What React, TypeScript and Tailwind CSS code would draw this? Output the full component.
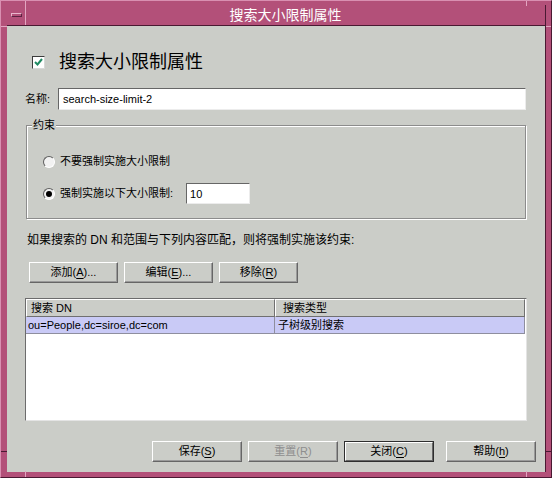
import type { ReactNode } from 'react'

const GREY = 'bg-[#cbcdc8]'

function Btn({ children, className = '', disabled = false }: { children: ReactNode; className?: string; disabled?: boolean }) {
  return (
    <button
      className={`h-[21px] flex items-center justify-center text-[11px] leading-none bg-[#cbcdc8] border border-t-white border-l-white border-r-[#666] border-b-[#666] shadow-[inset_-1px_-1px_0_#9a9a9a] ${disabled ? 'text-[#8e8e8e]' : 'text-black'} ${className}`}
    >
      {children}
    </button>
  )
}

function Mn({ children }: { children: ReactNode }) {
  return <span className="underline underline-offset-2">{children}</span>
}

function Radio({ checked }: { checked?: boolean }) {
  return (
    <div className="w-[12px] h-[12px] rounded-full border border-t-[#5e5e5e] border-l-[#5e5e5e] border-r-white border-b-white bg-[#f2f2f2] flex items-center justify-center">
      {checked && <div className="w-[6px] h-[6px] rounded-full bg-black" />}
    </div>
  )
}

export default function App() {
  return (
    <div className="relative w-[552px] h-[478px] bg-[#b35079] border border-t-[#d98fb1] border-l-[#d98fb1] border-r-[#4a1932] border-b-[#4a1932] pl-[6px] pr-[5px] pt-[4px] pb-[5px] flex flex-col font-['Liberation_Sans','Noto_Sans_CJK_SC',sans-serif] text-black">
      {/* resize handle marks on the frame */}
      <span className="absolute left-[24px] top-0 w-px h-[5px] bg-[#e2a6c1]" />
      <span className="absolute right-[24px] top-0 w-px h-[5px] bg-[#e2a6c1]" />
      <span className="absolute left-[24px] bottom-0 w-px h-[6px] bg-[#e2a6c1]" />
      <span className="absolute right-[24px] bottom-0 w-px h-[6px] bg-[#e2a6c1]" />
      <span className="absolute left-0 top-[25px] w-[6px] h-px bg-[#e2a6c1]" />
      <span className="absolute right-0 top-[25px] w-[5px] h-px bg-[#e2a6c1]" />
      <span className="absolute left-0 bottom-[25px] w-[6px] h-px bg-[#4a1932]" />
      <span className="absolute right-0 bottom-[25px] w-[5px] h-px bg-[#4a1932]" />

      {/* title bar */}
      <div className="h-[21px] flex border-b border-b-[#4a1932] border-r border-r-[#4a1932]">
        <div className="w-[19px] flex items-center justify-center border-r border-r-[#e2a6c1]">
          <div className="w-[11px] h-[4px] border border-t-[#e9b6cc] border-l-[#e9b6cc] border-r-[#5b2241] border-b-[#5b2241]" />
        </div>
        <div className="flex-1 flex items-center justify-center text-white text-[14px] leading-none">搜索大小限制属性</div>
      </div>

      {/* dialog body */}
      <div className={`flex-1 ${GREY} flex flex-col border-r border-r-[#4a1932]`}>
        <div className="px-[18px] flex flex-col">
          <div className="mt-[24px] h-[24px] flex items-center pl-[7px]">
            <div className="w-[13px] h-[13px] bg-white border border-t-[#3c3c3c] border-l-[#3c3c3c] border-r-[#d8d8d8] border-b-[#d8d8d8] flex items-center justify-center">
              <svg width="9" height="8" viewBox="0 0 9 8">
                <path d="M1 4 L3.5 6.5 L8 1" fill="none" stroke="#1f8a62" strokeWidth="2" />
              </svg>
            </div>
            <span className="ml-[14px] text-[18px] leading-none">搜索大小限制属性</span>
          </div>

          <div className="mt-[14px] h-[22px] flex items-center">
            <span className="w-[33px] text-[11px]">名称:</span>
            <input
              readOnly
              value="search-size-limit-2"
              className="flex-1 mr-[1px] h-[22px] bg-white border border-t-[#666] border-l-[#666] border-r-[#ececec] border-b-[#ececec] px-[4px] text-[11px] outline-none font-['Liberation_Sans',sans-serif]"
            />
          </div>

          <div className="relative mt-[15px] mx-[1px] border border-[#8c8c8c] shadow-[inset_1px_1px_0_#fff,1px_1px_0_#fff] pt-[25px] pb-[14px] pl-[16px] flex flex-col gap-[11px]">
            <span className={`absolute left-[5px] -top-[8px] px-[1px] ${GREY} text-[11px] leading-[14px]`}>约束</span>
            <div className="h-[21px] flex items-center">
              <Radio />
              <span className="ml-[5px] text-[11px]">不要强制实施大小限制</span>
            </div>
            <div className="h-[21px] flex items-center">
              <Radio checked />
              <span className="ml-[5px] text-[11px]">强制实施以下大小限制:</span>
              <input
                readOnly
                value="10"
                className="ml-[13px] w-[64px] h-[21px] bg-white border border-t-[#666] border-l-[#666] border-r-[#ececec] border-b-[#ececec] px-[3px] text-[11px] outline-none font-['Liberation_Sans',sans-serif]"
              />
            </div>
          </div>

          <div className="mt-[13px] h-[16px] flex items-center pl-[2px] text-[12px]">如果搜索的 DN 和范围与下列内容匹配，则将强制实施该约束:</div>

          <div className="mt-[14px] flex gap-[6px] pl-[4px]">
            <Btn className="w-[89px]">添加(<Mn>A</Mn>)...</Btn>
            <Btn className="w-[89px]">编辑(<Mn>E</Mn>)...</Btn>
            <Btn className="w-[79px]">移除(<Mn>R</Mn>)</Btn>
          </div>

          <div className="mt-[15px] h-[123px] bg-white border border-t-[#6c6c6c] border-l-[#6c6c6c] border-r-[#e4e4e4] border-b-[#e4e4e4] flex flex-col text-[11px]">
            <div className={`flex h-[18px] ${GREY} mr-[1px]`}>
              <div className="w-[249px] flex items-center pl-[4px] border border-t-white border-l-white border-r-[#707070] border-b-[#707070]">搜索 DN</div>
              <div className="flex-1 flex items-center pl-[7px] border border-t-white border-l-white border-r-[#707070] border-b-[#707070]">搜索类型</div>
            </div>
            <div className="flex h-[17px] bg-[#c9caf6] mr-[1px]">
              <div className="w-[249px] flex items-center pl-[2px] border-r border-b border-[#8e8e9e]">ou=People,dc=siroe,dc=com</div>
              <div className="flex-1 flex items-center pl-[3px] border-r border-b border-[#8e8e9e]">子树级别搜索</div>
            </div>
          </div>
        </div>

        <div className="mt-[20px] flex justify-end pr-[9px]">
          <Btn className="w-[90px]">保存(<Mn>S</Mn>)</Btn>
          <Btn className="ml-[6px] w-[90px]" disabled>重置(<Mn>R</Mn>)</Btn>
          <div className="ml-[6px] w-[90px] h-[21px] border border-[#2e2e2e] flex">
            <button className="flex-1 flex items-center justify-center text-[11px] leading-none bg-[#cbcdc8] border border-t-white border-l-white border-r-[#666] border-b-[#666]">
              关闭(<Mn>C</Mn>)
            </button>
          </div>
          <Btn className="ml-[12px] w-[90px]">帮助(<Mn>h</Mn>)</Btn>
        </div>
      </div>
    </div>
  )
}
